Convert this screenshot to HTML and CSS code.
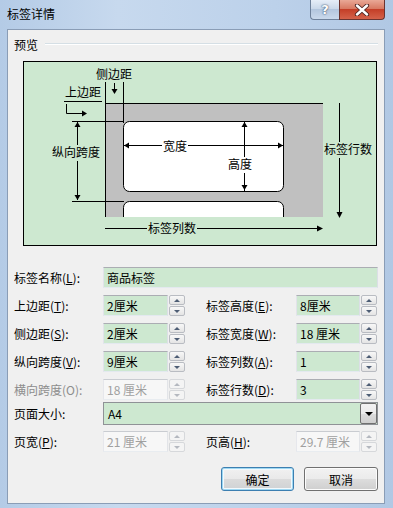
FILE: index.html
```html
<!DOCTYPE html>
<html lang="zh-CN">
<head>
    <meta charset="UTF-8">
    <title>标签详情</title>
    <link rel="stylesheet" href="styles.css">
</head>
<body>
<div class="window">
    <div class="titlebar">
        <span class="title">标签详情</span>
        <div class="caption">
            <span class="cap-help">?</span>
            <span class="cap-close">
                <svg width="16" height="12" viewBox="0 0 16 12">
                    <path d="M3 1.5 L13 10.5 M13 1.5 L3 10.5" stroke="#4a2220" stroke-width="4.2" stroke-linecap="round"/>
                    <path d="M3 1.5 L13 10.5 M13 1.5 L3 10.5" stroke="#fff" stroke-width="2.4" stroke-linecap="round"/>
                </svg>
            </span>
        </div>
    </div>

    <div class="client">
        <div class="group-head">
            <span>预览</span>
            <i class="group-line"></i>
        </div>

        <svg class="preview" width="354" height="185" viewBox="0 0 354 185">
            <rect x="0.5" y="0.5" width="353" height="184" fill="#cde8d0" stroke="#000"/>
            <rect x="82" y="42" width="218" height="114" fill="#c0c0c0"/>
            <path d="M82.5 21 V156 M82 42.5 H300" stroke="#000"/>
            <rect x="100.5" y="60.5" width="160" height="70" rx="6" fill="#fff" stroke="#000"/>
            <path d="M100.5 156 V146.5 a6 6 0 0 1 6 -6 H254.5 a6 6 0 0 1 6 6 V156" fill="#fff" stroke="#000"/>

            <!-- 侧边距 -->
            <path d="M100.5 21 V62" stroke="#000"/>
            <path d="M91.5 22 V28" stroke="#000"/>
            <polygon points="88.5,28 94.5,28 91.5,33" fill="#000"/>
            <text x="91" y="18" class="pv-text">侧边距</text>

            <!-- 上边距 -->
            <text x="60" y="36" class="pv-text">上边距</text>
            <path d="M41 40.5 H79 M43.5 43 V52.5 H60" stroke="#000" fill="none"/>
            <polygon points="59,49.5 59,55.5 64,52.5" fill="#000"/>

            <!-- 纵向跨度 -->
            <path d="M49 60.5 H101 M49 140.5 H101 M54.5 61 V139" stroke="#000"/>
            <polygon points="51.5,66 57.5,66 54.5,61" fill="#000"/>
            <polygon points="51.5,134 57.5,134 54.5,139" fill="#000"/>
            <rect x="29" y="84" width="48" height="16" fill="#cde8d0"/>
            <text x="53" y="96" class="pv-text">纵向跨度</text>

            <!-- 宽度 -->
            <path d="M101 84.5 H260" stroke="#000"/>
            <polygon points="106,81.5 106,87.5 101,84.5" fill="#000"/>
            <polygon points="255,81.5 255,87.5 260,84.5" fill="#000"/>
            <rect x="139" y="79" width="26" height="15" fill="#fff"/>
            <text x="152" y="90" class="pv-text">宽度</text>

            <!-- 高度 -->
            <path d="M221.5 61 V130" stroke="#000"/>
            <polygon points="218.5,66 224.5,66 221.5,61" fill="#000"/>
            <polygon points="218.5,124 224.5,124 221.5,129" fill="#000"/>
            <rect x="204" y="96" width="26" height="16" fill="#fff"/>
            <text x="217" y="108" class="pv-text">高度</text>

            <!-- 标签行数 -->
            <path d="M316.5 42 V152" stroke="#000"/>
            <polygon points="313.5,151 319.5,151 316.5,157" fill="#000"/>
            <rect x="300" y="81" width="50" height="16" fill="#cde8d0"/>
            <text x="325" y="93" class="pv-text">标签行数</text>

            <!-- 标签列数 -->
            <path d="M82 167.5 H295" stroke="#000"/>
            <polygon points="294,164.5 294,170.5 300,167.5" fill="#000"/>
            <rect x="124" y="159" width="50" height="16" fill="#cde8d0"/>
            <text x="149" y="171.5" class="pv-text">标签列数</text>
        </svg>

        <div class="form">
            <div class="row first">
                <label class="lbl">标签名称(<u>L</u>):</label>
                <div class="field wide">商品标签</div>
            </div>

            <div class="row">
                <div class="cell">
                    <label class="lbl">上边距(<u>T</u>):</label>
                    <div class="field">2厘米</div>
                    <div class="spin"><b class="up"></b><b class="down"></b></div>
                </div>
                <div class="cell right">
                    <label class="lbl">标签高度(<u>E</u>):</label>
                    <div class="field">8厘米</div>
                    <div class="spin"><b class="up"></b><b class="down"></b></div>
                </div>
            </div>

            <div class="row">
                <div class="cell">
                    <label class="lbl">侧边距(<u>S</u>):</label>
                    <div class="field">2厘米</div>
                    <div class="spin"><b class="up"></b><b class="down"></b></div>
                </div>
                <div class="cell right">
                    <label class="lbl">标签宽度(<u>W</u>):</label>
                    <div class="field">18 厘米</div>
                    <div class="spin"><b class="up"></b><b class="down"></b></div>
                </div>
            </div>

            <div class="row">
                <div class="cell">
                    <label class="lbl">纵向跨度(<u>V</u>):</label>
                    <div class="field">9厘米</div>
                    <div class="spin"><b class="up"></b><b class="down"></b></div>
                </div>
                <div class="cell right">
                    <label class="lbl">标签列数(<u>A</u>):</label>
                    <div class="field">1</div>
                    <div class="spin"><b class="up"></b><b class="down"></b></div>
                </div>
            </div>

            <div class="row">
                <div class="cell">
                    <label class="lbl off">横向跨度(O):</label>
                    <div class="field off">18 厘米</div>
                    <div class="spin off"><b class="up"></b><b class="down"></b></div>
                </div>
                <div class="cell right">
                    <label class="lbl">标签行数(<u>D</u>):</label>
                    <div class="field">3</div>
                    <div class="spin"><b class="up"></b><b class="down"></b></div>
                </div>
            </div>

            <div class="row select-row">
                <label class="lbl">页面大小:</label>
                <div class="select">
                    <span>A4</span>
                    <span class="drop"></span>
                </div>
            </div>

            <div class="row page-row">
                <div class="cell">
                    <label class="lbl">页宽(<u>P</u>):</label>
                    <div class="field off">21 厘米</div>
                    <div class="spin off"><b class="up"></b><b class="down"></b></div>
                </div>
                <div class="cell right">
                    <label class="lbl">页高(<u>H</u>):</label>
                    <div class="field off">29.7 厘米</div>
                    <div class="spin off"><b class="up"></b><b class="down"></b></div>
                </div>
            </div>
        </div>

        <div class="buttons">
            <button class="btn default">确定</button>
            <button class="btn">取消</button>
        </div>
    </div>
</div>
</body>
</html>
```

FILE: styles.css
```css
body{
    margin: 0;
    font-family: "Noto Sans CJK SC", "Microsoft YaHei", sans-serif;
    font-size: 12px;
    color: #000;
}
.window{
    width: 393px;
    height: 508px;
    overflow: hidden;
    background: linear-gradient(90deg, #b4cbe6 0%, #c7d9ee 30%, #bcd1ea 70%, #b1c8e4 100%);
}
.titlebar{
    height: 29px;
    display: flex;
    align-items: flex-start;
}
.title{
    margin: 6px 0 0 7px;
    line-height: 16px;
}
.caption{
    margin-left: auto;
    margin-right: 8px;
    display: flex;
}
.cap-help{
    box-sizing: border-box;
    width: 29px;
    height: 20px;
    border: 1px solid #6e819b;
    border-top: none;
    border-right: none;
    border-radius: 0 0 0 4px;
    background: linear-gradient(#e6eef8, #cbd9ea 45%, #b3c6de 50%, #cad9ec);
    color: #fff;
    font-family: "DejaVu Sans", sans-serif;
    font-weight: bold;
    font-size: 13px;
    line-height: 19px;
    text-align: center;
    text-shadow: 0 0 2px #3e526e, 0 0 1px #3e526e;
}
.cap-close{
    box-sizing: border-box;
    width: 46px;
    height: 20px;
    border: 1px solid #6b3430;
    border-top: none;
    border-radius: 0 0 4px 0;
    background: linear-gradient(#e9a896, #d87a63 45%, #c43f28 50%, #d4624a);
    display: flex;
    align-items: center;
    justify-content: center;
}
.client{
    margin-left: 7px;
    width: 364px;
    height: 473px;
    border: 1px solid #8a9db6;
    background: #f0f0f0;
    padding: 0 6px;
}
.group-head{
    margin-top: 6px;
    height: 16px;
    display: flex;
    align-items: center;
}
.group-line{
    flex: 1;
    height: 0;
    border-top: 1px solid #d5dfe5;
    border-bottom: 1px solid #fff;
    margin-left: 7px;
}
.preview{
    display: block;
    margin: 9px 0 0 9px;
}
.pv-text{
    font-family: "Noto Sans CJK SC", sans-serif;
    font-size: 12px;
    text-anchor: middle;
    fill: #000;
}
.row{
    display: flex;
    align-items: center;
    height: 21px;
    margin-top: 7px;
}
.row.first{
    margin-top: 21px;
}
.row.select-row{
    height: 23px;
    margin-top: 2px;
}
.row.page-row{
    margin-top: 6px;
}
.cell{
    display: flex;
    align-items: center;
    width: 171px;
}
.cell.right{
    margin-left: 21px;
}
.lbl{
    width: 89px;
    flex: none;
    white-space: nowrap;
}
.cell.right .lbl{
    width: 90px;
}
.lbl.off{
    color: #8d8d8d;
}
.field{
    box-sizing: border-box;
    width: 65px;
    height: 21px;
    border: 1px solid;
    border-color: #abadb3 #dbdfe6 #e3e9ef #e2e3ea;
    background: #cde8d0;
    padding-left: 3px;
    line-height: 19px;
    white-space: nowrap;
}
.field.wide{
    width: 275px;
}
.field.off{
    background: #f7f7f7;
    color: #a0a0a0;
    border-color: #c9ccd1 #e2e4e8 #e8ecf0 #e6e7ec;
}
.spin{
    width: 16px;
    height: 21px;
    margin-left: 1px;
    display: flex;
    flex-direction: column;
    gap: 1px;
}
.spin b{
    flex: 1;
    border: 1px solid #b9bcc2;
    border-radius: 2px;
    background: linear-gradient(#f8f8f8, #e4e4e4);
    display: flex;
    align-items: center;
    justify-content: center;
}
.spin b::after{
    content: "";
    width: 0;
    height: 0;
    border-left: 3px solid transparent;
    border-right: 3px solid transparent;
}
.spin .up::after{
    border-bottom: 3px solid #4d5d74;
}
.spin .down::after{
    border-top: 3px solid #4d5d74;
}
.spin.off b{
    border-color: #d6d8db;
    background: #f4f4f4;
}
.spin.off .up::after{
    border-bottom-color: #b4b8bf;
}
.spin.off .down::after{
    border-top-color: #b4b8bf;
}
.select{
    box-sizing: border-box;
    width: 275px;
    height: 23px;
    border: 1px solid #8f9296;
    background: #cde8d0;
    display: flex;
    align-items: center;
    padding-left: 4px;
}
.select .drop{
    margin-left: auto;
    box-sizing: border-box;
    width: 17px;
    height: 21px;
    border: 1px solid #707070;
    border-radius: 2px;
    background: linear-gradient(#f2f2f2, #ebebeb 50%, #dddddd 50%, #cfcfcf);
    display: flex;
    align-items: center;
    justify-content: center;
}
.select .drop::after{
    content: "";
    border-left: 4px solid transparent;
    border-right: 4px solid transparent;
    border-top: 4px solid #000;
}
.buttons{
    display: flex;
    justify-content: flex-end;
    gap: 10px;
    margin-top: 15px;
}
.btn{
    box-sizing: border-box;
    width: 74px;
    height: 24px;
    border: 1px solid #707070;
    border-radius: 3px;
    background: linear-gradient(#f2f2f2, #ebebeb 50%, #dddddd 50%, #cfcfcf);
    box-shadow: inset 0 0 0 1px #fcfcfc;
    font-family: "Noto Sans CJK SC", sans-serif;
    font-size: 12px;
    color: #000;
    padding: 0;
}
.btn.default{
    width: 73px;
    border-color: #3c7fb1;
    box-shadow: inset 0 0 0 1px #9fd8f2, inset 0 0 0 2px #f2f9fd;
    background: linear-gradient(#f1f1f1, #e9e9e9 50%, #dbdbdb 50%, #cfd2d4);
}
```
